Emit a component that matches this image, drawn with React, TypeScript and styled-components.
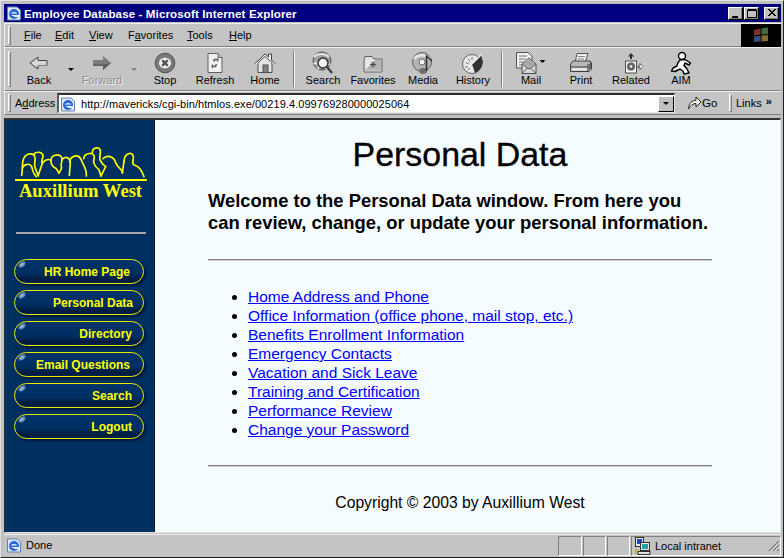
import React from "react";
import styled, { createGlobalStyle } from "styled-components";

const Global = createGlobalStyle`
  html, body { margin: 0; padding: 0; width: 784px; height: 558px; overflow: hidden; background: #c0c0c0; }
  * { box-sizing: border-box; }
`;

const dither = `
  background-color: #c4c4c4;
  background-image: repeating-conic-gradient(#bcbcbc 0 25%, #cccccc 0 50%);
  background-size: 2px 2px;
`;

const Window = styled.div`
  width: 784px; height: 558px; display: flex; flex-direction: column;
  background: #c0c0c0;
  border-top: 1px solid #e0e0e0; border-left: 1px solid #e0e0e0;
  border-right: 1px solid #202020; border-bottom: 1px solid #202020;
  padding: 3px 2px 1px 3px;
  font-family: "Liberation Sans", Arial, sans-serif; font-size: 11px; color: #000;
`;
const TitleBar = styled.div`
  height: 18px; flex: none; background: #000080; color: #fff; display: flex; align-items: center;
  padding: 0 2px 0 2px; font-weight: 700; font-size: 11.6px; gap: 2px;
`;
const TitleText = styled.span`flex: 1; letter-spacing: 0.1px; white-space: nowrap;`;
const CaptionButtons = styled.div`display: flex;`;
const CaptionButton = styled.div<{ $gap?: boolean }>`
  width: 15px; height: 13px; margin-left: ${p => (p.$gap ? 5 : 1)}px; background: #c0c0c0;
  border-top: 1px solid #fff; border-left: 1px solid #fff; border-right: 1px solid #000; border-bottom: 1px solid #000;
  box-shadow: inset -1px -1px 0 #808080; display: flex; align-items: center; justify-content: center;
`;
const Rows = styled.div`flex: none; margin-top: 1px; display: flex; flex-direction: column;`;
const Row = styled.div<{ $h: number }>`
  height: ${p => p.$h}px; display: flex; align-items: center; ${dither}
  border-top: 1px solid #f0f0f0; border-bottom: 1px solid #808080; border-left: 1px solid #f0f0f0;
`;
const Grip = styled.div<{ $h: number }>`
  flex: none; width: 3px; height: ${p => p.$h}px; margin: 0 0 0 3px;
  border-top: 1px solid #fff; border-left: 1px solid #fff; border-right: 1px solid #808080; border-bottom: 1px solid #808080;
`;
const MenuItems = styled.div`flex: 1; display: flex; align-items: center; height: 100%; padding-left: 13px;`;
const MenuItem = styled.span<{ $w: number }>`
  width: ${p => p.$w}px; flex: none; font-size: 11px; u { text-decoration: underline; }
`;
const Throbber = styled.div`
  width: 40px; height: 23px; background: #000; flex: none; display: flex; align-items: center; justify-content: center;
`;
const Tools = styled.div`display: flex; align-items: flex-start; height: 100%; padding-top: 3px; margin-left: 3px;`;
const ToolButton = styled.div<{ $off?: boolean }>`
  width: 50px; flex: none; display: flex; flex-direction: column; align-items: center; height: 38px;
  font-size: 11px; color: ${p => (p.$off ? "#8c8c8c" : "#000")};
  text-shadow: ${p => (p.$off ? "1px 1px 0 #f4f4f4" : "none")};
  svg { display: block; flex: none; }
  span { margin-top: -1px; line-height: 13px; white-space: nowrap; }
`;
const DropSlot = styled.div`
  width: 13px; flex: none; height: 26px; display: flex; align-items: flex-end; justify-content: center; padding-bottom: 6px;
`;
const Caret = styled.div<{ $off?: boolean }>`
  width: 0; height: 0; border-left: 3px solid transparent; border-right: 3px solid transparent;
  border-top: 3px solid ${p => (p.$off ? "#808080" : "#000")};
`;
const ToolSep = styled.div`
  flex: none; width: 2px; height: 36px; margin: 0 3px 0 3px; border-left: 1px solid #808080; border-right: 1px solid #f4f4f4;
`;
const AddressRow = styled.div`
  height: 24px; display: flex; align-items: center; ${dither}
  border-bottom: 1px solid #808080; border-left: 1px solid #f0f0f0; border-top: 1px solid #f0f0f0;
`;
const AddressLabel = styled.span`margin-left: 4px; width: 42px; flex: none; font-size: 11px; u { text-decoration: underline; }`;
const Field = styled.div`
  width: 618px; height: 20px; flex: none; background: #fff; display: flex; align-items: center; padding-left: 1px;
  border-top: 2px solid #303030; border-left: 2px solid #606060; border-right: 1px solid #e8e8e8; border-bottom: 1px solid #e8e8e8;
  svg { flex: none; }
`;
const Url = styled.span`flex: 1; margin-left: 5px; font-size: 11px; letter-spacing: 0.06px; white-space: nowrap; overflow: hidden;`;
const Combo = styled.div`
  width: 16px; height: 16px; flex: none; background: #c0c0c0; display: flex; align-items: center; justify-content: center;
  border-top: 1px solid #fff; border-left: 1px solid #fff; border-right: 1px solid #000; border-bottom: 1px solid #000;
`;
const Go = styled.div`
  margin-left: 12px; width: 39px; flex: none; display: flex; align-items: center; gap: 0; font-size: 11.5px;
`;
const Links = styled.div`
  flex: 1; display: flex; align-items: center; font-size: 11px;
  span { margin-left: 4px; }
  b { margin-left: 4px; font-size: 11px; position: relative; top: -2px; }
`;
const Frame = styled.div`
  flex: 1; min-height: 0; margin: 3px 0 1px 0; display: flex;
  border-top: 2px solid #303030; border-left: 1px solid #303030; border-right: 1px solid #e8e8e8; border-bottom: 1px solid #e8e8e8;
`;
const Side = styled.nav`
  width: 150px; flex: none; background: #003060; display: flex; flex-direction: column; align-items: center;
  border-right: 1px solid #001c3c; padding: 25px 0 0 2px;
`;
const LogoLine = styled.div`width: 132px; height: 2px; background: #ffff00; margin-top: 1px;`;
const LogoText = styled.div`
  margin-top: 0; font-family: "Liberation Serif", "Times New Roman", serif; font-weight: 700; font-size: 18.6px;
  color: #ffff00; line-height: 20px; white-space: nowrap;
`;
const SideRule = styled.div`width: 130px; height: 2px; background: #a8a8a8; margin-top: 31px; margin-bottom: 25px;`;
const NavList = styled.div`display: flex; flex-direction: column; gap: 6px; width: 130px; align-self: flex-start; margin-left: 7px;`;
const NavButton = styled.a<{ $pad: number }>`
  position: relative; height: 25px; border-radius: 13px; border: 1.5px solid #e8e800; display: flex; align-items: center;
  justify-content: flex-end; padding-right: ${p => p.$pad}px; font-weight: 700; font-size: 12px; color: #ffff00;
  background: linear-gradient(#00346a 0%, #002e60 60%, #001a3e 88%, #002450 100%);
  box-shadow: 2px 2px 2px #00183a;
  &::before {
    content: ""; position: absolute; left: 3px; top: 2px; width: 8px; height: 5px; border-radius: 50%;
    background: radial-gradient(#a8c4e4, #40689c 80%); transform: rotate(-35deg);
  }
`;
const Main = styled.main`
  flex: 1; padding: 0 68px 0 53px;
  background-color: #f6fcff;
  background-image: repeating-conic-gradient(#f2fbfe 0 25%, #fafdff 0 50%);
  background-size: 2px 2px;
`;
const Heading = styled.h1`
  margin: 15px 0 0; text-align: center; font-size: 33.9px; font-weight: 400; line-height: 38px; color: #000;
  -webkit-text-stroke: 0.35px #000; white-space: nowrap;
`;
const Lead = styled.p`
  margin: 17px 0 0; font-size: 18.4px; font-weight: 700; line-height: 22px; white-space: nowrap;
`;
const Rule = styled.hr<{ $top: number }>`
  margin: ${p => p.$top}px 0 0; height: 2px; border: 0; border-top: 1px solid #808080; border-bottom: 1px solid #d0d0d0;
`;
const LinkList = styled.ul`margin: 26px 0 0; padding: 0 0 0 40px; font-size: 15.5px; line-height: 19px;`;
const Item = styled.li`a { color: #0000ff; text-decoration: underline; }`;
const Copy = styled.p`margin: 26px 0 0; text-align: center; font-size: 15.7px; line-height: 19px;`;
const Status = styled.div`
  height: 22px; flex: none; display: flex; align-items: center; ${dither}
  border-top: 1px solid #f0f0f0;
`;
const StatusMain = styled.div`flex: 1; display: flex; align-items: center; gap: 4px; padding: 0 0 1px 2px; font-size: 11px;`;
const Pane = styled.div<{ $w: number }>`
  width: ${p => p.$w}px; height: 20px; flex: none; display: flex; align-items: center; gap: 4px; font-size: 11px;
  border-left: 1px solid #808080; border-top: 1px solid #808080; border-right: 1px solid #fff; border-bottom: 1px solid #fff;
  padding-left: 2px; margin-left: 1px;
`;
const PaneLabel = styled.span`flex: 1; white-space: nowrap;`;

const S = 24;
const Ico = ({ children, w = S, h = S }: { children: React.ReactNode; w?: number; h?: number }) => (
  <svg width={w} height={h} viewBox={`0 0 ${w} ${h}`}>{children}</svg>
);
const Back = () => (
  <Ico><path d="M3 12 L11 6 V9.5 H20 V14.5 H11 V18 Z" fill="#d8d8d8" stroke="#404040" strokeWidth="1" /><path d="M11 14.5H20" stroke="#808080" /></Ico>
);
const Forward = () => (
  <Ico><path d="M21 12 L13 5 V9 H3 V15 H13 V19 Z" fill="#7c7c7c" /><path d="M21 12 L13 19 V15 H3 V13.5 H13" fill="#5c5c5c" /></Ico>
);
const Stop = () => (
  <Ico>
    <circle cx="12" cy="12" r="9.8" fill="#7a7a7a" stroke="#505050" />
    <ellipse cx="12" cy="12" rx="6" ry="5.2" fill="#f4f4f4" />
    <path d="M9.2 9.2 L14.8 14.8 M14.8 9.2 L9.2 14.8" stroke="#555" strokeWidth="2.4" />
  </Ico>
);
const Refresh = () => (
  <Ico>
    <path d="M5 2.5 H15 L19 6.5 V21.5 H5 Z" fill="#f0f0f0" stroke="#606060" />
    <path d="M15 2.5 V6.5 H19" fill="#c0c0c0" stroke="#606060" />
    <path d="M10 10 C10 8 12 7 14 8 L14 6.5 L16 9 L14 11 V9.5 C12.5 9 11.5 9.5 11.5 11 Z" fill="#606060" />
    <path d="M14 13 C14 16 12 17 10 16 V18 L8 15 L10 13 V14.5 C11.5 15 12.5 14.5 12.5 13 Z" fill="#606060" />
  </Ico>
);
const Home = () => (
  <Ico>
    <path d="M1.5 13 L12 3 L15.5 6 V3 H18.5 V9 L22.5 13" fill="#f4f4f4" stroke="#404040" />
    <path d="M5 11.5 V21.5 H19 V11.5 L12 5.5 Z" fill="#e4e4e4" stroke="#505050" />
    <rect x="10" y="14" width="5" height="7.5" fill="#808080" stroke="#505050" />
  </Ico>
);
const Search = () => (
  <Ico>
    <circle cx="11" cy="10" r="9" fill="#a0a0a0" stroke="#505050" />
    <path d="M3 6 C7 2 14 2 18 6 M2.5 13 C7 10 9 14 7 18 M15 18 C14 15 17 13 19.5 13" stroke="#e0e0e0" strokeWidth="2" fill="none" />
    <circle cx="12" cy="12" r="5" fill="#f0f0f0" stroke="#303030" strokeWidth="1.5" />
    <path d="M16 16 L21 22" stroke="#404040" strokeWidth="2.5" />
  </Ico>
);
const Favs = () => (
  <Ico>
    <path d="M3 9 L4 5.5 H11 L13 8 H21 V21 H3 Z" fill="#e0e0e0" stroke="#606060" />
    <rect x="4.5" y="9" width="15.5" height="10.5" fill="#b4b4b4" />
    <path d="M4.5 9 H14 L4.5 19 Z" fill="#e8e8e8" />
    <path d="M12 10.5 V16.5 M9 13.5 H15 M10 11.5 L14 15.5 M14 11.5 L10 15.5" stroke="#505050" />
  </Ico>
);
const Media = () => (
  <Ico>
    <circle cx="11" cy="11" r="9.5" fill="#b4b4b4" stroke="#606060" />
    <path d="M3 8 C7 3 15 3 19 8" stroke="#e8e8e8" strokeWidth="2.4" fill="none" />
    <circle cx="11" cy="11" r="3" fill="#f0f0f0" stroke="#707070" />
    <ellipse cx="12" cy="20" rx="4" ry="3" fill="#707070" />
    <path d="M15.5 20 V5 L21 10" stroke="#303030" strokeWidth="1.6" fill="none" />
  </Ico>
);
const History = () => (
  <Ico>
    <circle cx="11" cy="13" r="9.5" fill="#e8e8e8" stroke="#606060" />
    <path d="M11 13 L20 4 L22 11 C21 17 18 20 14 22 Z" fill="#303030" />
    <path d="M11 13 L21 3" stroke="#e8e8e8" strokeWidth="1.5" />
    <path d="M5 12 H8 M7 8 L9 10 M11 6 V9 M4 16 H7 M7 19 L9 17" stroke="#707070" />
  </Ico>
);
const Mail = () => (
  <Ico w={32} h={24}>
    <path d="M1.5 1.5 H13 L17 5 V17 H1.5 Z" fill="#f0f0f0" stroke="#505050" />
    <path d="M4 5H12 M4 8H11 M4 11H9 M4 14H8" stroke="#707070" />
    <path d="M7 13 L14 7 L21 13 V22.5 H7 Z" fill="#d8d8d8" stroke="#505050" />
    <path d="M7 13 L14 18 L21 13 M7 22.5 L12.5 17 M21 22.5 L15.5 17" stroke="#505050" fill="none" />
    <path d="M8 12.5 L14 8 L20 12.5 L14 17 Z" fill="#a8a8a8" />
    <path d="M24.5 9 H30.5 L27.5 12 Z" fill="#000" />
  </Ico>
);
const Print = () => (
  <Ico>
    <path d="M8 2.5 H19 L16 12 H6 Z" fill="#f0f0f0" stroke="#505050" />
    <path d="M9 5.5H16 M8.5 8H15" stroke="#808080" />
    <path d="M1.5 13 L4 10 H21 L22.5 12 V18 L20 20.5 H1.5 Z" fill="#b8b8b8" stroke="#404040" />
    <path d="M1.5 16 H19 M19 13 V20" stroke="#404040" />
    <path d="M20 13 L22 11 V17 L20 19Z" fill="#606060" />
    <rect x="3" y="17" width="15" height="2.5" fill="#e8e8e8" />
  </Ico>
);
const Related = () => (
  <Ico>
    <path d="M9 5.5 L12 2 L15 5.5 H13 V8 H11 V5.5 Z" fill="#303030" />
    <rect x="6.5" y="10" width="11" height="12" fill="#f0f0f0" stroke="#505050" />
    <circle cx="12" cy="15.5" r="4" fill="#606060" />
    <circle cx="12" cy="15.5" r="1.4" fill="#e8e8e8" />
    <path d="M19 15 H21 V12.5 L24 15.5 L21 18.5 V16.5 H19 Z" fill="#fff" stroke="#404040" strokeWidth="0.8" />
  </Ico>
);
const Aim = () => (
  <Ico>
    <circle cx="13" cy="5" r="3.5" fill="#fff" stroke="#000" strokeWidth="1.4" />
    <path d="M11 9 C9 11 8 13 8 15 L4 17 L2.5 20 L6 20.5 L11 18 L14 20 L15 23 L20 22 L18 18 L15 14.5 L16 12 L20 14 L21.5 12 L16 8.5 Z" fill="#fff" stroke="#000" strokeWidth="1.4" strokeLinejoin="round" />
  </Ico>
);
const IeLogo = () => (
  <svg width="16" height="16" viewBox="0 0 16 16">
    <path d="M1.5 2 H11 L14.5 5 V15 H1.5Z" fill="#e0e8f8" stroke="#6080b0" />
    <circle cx="8" cy="9" r="5" fill="#2868d8" />
    <ellipse cx="8" cy="9" rx="3" ry="2" fill="#e8f0ff" />
    <rect x="4" y="8.6" width="8" height="1.4" fill="#2868d8" />
    <rect x="8" y="10" width="5" height="2" fill="#e8f0ff" />
  </svg>
);
const Flag = () => (
  <svg width="18" height="18" viewBox="0 0 18 18">
    <path d="M2 4 L8.5 2.5 V8.5 L2 9.5Z" fill="#7c3428" />
    <path d="M9.5 2.3 L16 1.5 V8 L9.5 8.5Z" fill="#406a40" />
    <path d="M2 10.5 L8.5 9.5 V15.5 L2 16Z" fill="#304e84" />
    <path d="M9.5 9.5 L16 9 V15 L9.5 15.5Z" fill="#847028" />
  </svg>
);
const Intranet = () => (
  <svg width="17" height="20" viewBox="0 0 17 20">
    <rect x="1.5" y="1.5" width="8" height="9" fill="#e8e8e8" stroke="#303030" />
    <rect x="3" y="3" width="5" height="5" fill="#2040d0" />
    <rect x="6.5" y="6.5" width="9" height="8" fill="#e8e8e8" stroke="#303030" />
    <rect x="8" y="8" width="6" height="5" fill="#20a0a0" />
    <rect x="4" y="15.5" width="12" height="3" fill="#e0e0e0" stroke="#303030" />
    <path d="M1 15H4M2 13V18" stroke="#c0a000" />
  </svg>
);
const GoArrow = () => (
  <svg width="15" height="16" viewBox="0 0 15 16">
    <path d="M1.5 14 C2 8 5 5.5 9 5.5 V2 L14 7 L9 12 V8.5 C6 8.5 4 10 1.5 14 Z" fill="#fff" stroke="#202020" />
  </svg>
);
const SizeGrip = () => (
  <svg width="12" height="12" viewBox="0 0 12 12">
    <path d="M11 1 L1 11 M11 5 L5 11 M11 9 L9 11" stroke="#808080" strokeWidth="1.2" />
    <path d="M11.5 2.5 L2.5 11.5 M11.5 6.5 L6.5 11.5" stroke="#f4f4f4" strokeWidth="0.8" />
  </svg>
);
const Ribbon = () => (
  <svg viewBox="42 81 408 99" width="136" height="33">
    <g fill="none" stroke="#ffff00" strokeWidth="5" strokeLinejoin="round" strokeLinecap="round">
      <path d="M68 172 C72 150 68 130 75 120 C82 106 104 102 108 118 C110 128 104 140 108 148 L118 174" />
      <path d="M70 150 C76 138 92 134 98 146 C102 156 100 166 112 176" />
      <path d="M104 110 C110 100 128 100 132 112 C134 122 124 128 130 136 L118 172" />
      <path d="M130 136 C136 128 146 122 156 126" />
      <path d="M156 130 C154 112 180 104 188 118 C192 130 182 140 188 150 L180 166 L172 152 C162 146 156 142 156 130" />
      <path d="M188 126 C198 114 210 116 214 132 L211 172" />
      <path d="M212 132 C214 114 238 106 246 124 C252 142 264 152 262 174" />
      <path d="M254 122 C256 104 286 100 286 118 C280 134 288 146 300 155 L306 174" />
      <path d="M280 104 C280 88 302 84 304 98 C306 114 292 124 320 146" />
      <path d="M312 122 C324 110 344 114 350 134 C356 150 368 150 371 165" />
      <path d="M375 130 C376 106 400 98 403 116 C404 130 396 136 406 141 C424 147 428 160 435 176" />
      <path d="M320 146 L306 174 M375 130 L370 165" />
    </g>
  </svg>
);

const links = [
  "Home Address and Phone",
  "Office Information (office phone, mail stop, etc.)",
  "Benefits Enrollment Information",
  "Emergency Contacts",
  "Vacation and Sick Leave",
  "Training and Certification",
  "Performance Review",
  "Change your Password",
];
const nav: [string, number][] = [
  ["HR Home Page", 13], ["Personal Data", 10], ["Directory", 11],
  ["Email Questions", 13], ["Search", 11], ["Logout", 11],
];

export default function App() {
  return (
    <Window>
      <Global />
      <TitleBar>
        <IeLogo />
        <TitleText>Employee Database - Microsoft Internet Explorer</TitleText>
        <CaptionButtons>
          <CaptionButton><svg width="9" height="9"><rect x="1" y="7" width="6" height="2" fill="#000" /></svg></CaptionButton>
          <CaptionButton><svg width="10" height="9"><path d="M.5 1.5H9.5V8.5H.5Z M.5 .5H9.5" fill="none" stroke="#000" /></svg></CaptionButton>
          <CaptionButton $gap><svg width="9" height="8"><path d="M1 0L8 7M2 0L9 7M8 0L1 7M9 0L2 7" stroke="#000" /></svg></CaptionButton>
        </CaptionButtons>
      </TitleBar>
      <Rows>
        <Row $h={24}>
          <Grip $h={19} />
          <MenuItems>
            <MenuItem $w={31}><u>F</u>ile</MenuItem>
            <MenuItem $w={34}><u>E</u>dit</MenuItem>
            <MenuItem $w={39}><u>V</u>iew</MenuItem>
            <MenuItem $w={59}>F<u>a</u>vorites</MenuItem>
            <MenuItem $w={42}><u>T</u>ools</MenuItem>
            <MenuItem $w={40}><u>H</u>elp</MenuItem>
          </MenuItems>
          <Throbber><Flag /></Throbber>
        </Row>
        <Row $h={44}>
          <Grip $h={36} />
          <Tools>
            <ToolButton><Back /><span>Back</span></ToolButton>
            <DropSlot><Caret /></DropSlot>
            <ToolButton $off><Forward /><span>Forward</span></ToolButton>
            <DropSlot><Caret $off /></DropSlot>
            <ToolButton><Stop /><span>Stop</span></ToolButton>
            <ToolButton><Refresh /><span>Refresh</span></ToolButton>
            <ToolButton><Home /><span>Home</span></ToolButton>
            <ToolSep />
            <ToolButton><Search /><span>Search</span></ToolButton>
            <ToolButton><Favs /><span>Favorites</span></ToolButton>
            <ToolButton><Media /><span>Media</span></ToolButton>
            <ToolButton><History /><span>History</span></ToolButton>
            <ToolSep />
            <ToolButton><Mail /><span>Mail</span></ToolButton>
            <ToolButton><Print /><span>Print</span></ToolButton>
            <ToolButton><Related /><span>Related</span></ToolButton>
            <ToolButton><Aim /><span>AIM</span></ToolButton>
          </Tools>
        </Row>
        <AddressRow>
          <Grip $h={18} />
          <AddressLabel>A<u>d</u>dress</AddressLabel>
          <Field>
            <IeLogo />
            <Url>http://mavericks/cgi-bin/htmlos.exe/00219.4.099769280000025064</Url>
            <Combo><Caret /></Combo>
          </Field>
          <Go><GoArrow />Go</Go>
          <Links><Grip $h={18} /><span>Links</span><b>»</b></Links>
        </AddressRow>
      </Rows>
      <Frame>
        <Side>
          <Ribbon />
          <LogoLine />
          <LogoText>Auxillium West</LogoText>
          <SideRule />
          <NavList>
            {nav.map(([t, p]) => <NavButton key={t} $pad={p}>{t}</NavButton>)}
          </NavList>
        </Side>
        <Main>
          <Heading>Personal Data</Heading>
          <Lead>
            Welcome to the Personal Data window. From here you<br />
            can review, change, or update your personal information.
          </Lead>
          <Rule $top={25} />
          <LinkList>
            {links.map(l => <Item key={l}><a>{l}</a></Item>)}
          </LinkList>
          <Rule $top={26} />
          <Copy>Copyright © 2003 by Auxillium West</Copy>
        </Main>
      </Frame>
      <Status>
        <StatusMain><IeLogo />Done</StatusMain>
        <Pane $w={24} /><Pane $w={23} /><Pane $w={23} />
        <Pane $w={150}><Intranet /><PaneLabel>Local intranet</PaneLabel><SizeGrip /></Pane>
      </Status>
    </Window>
  );
}
